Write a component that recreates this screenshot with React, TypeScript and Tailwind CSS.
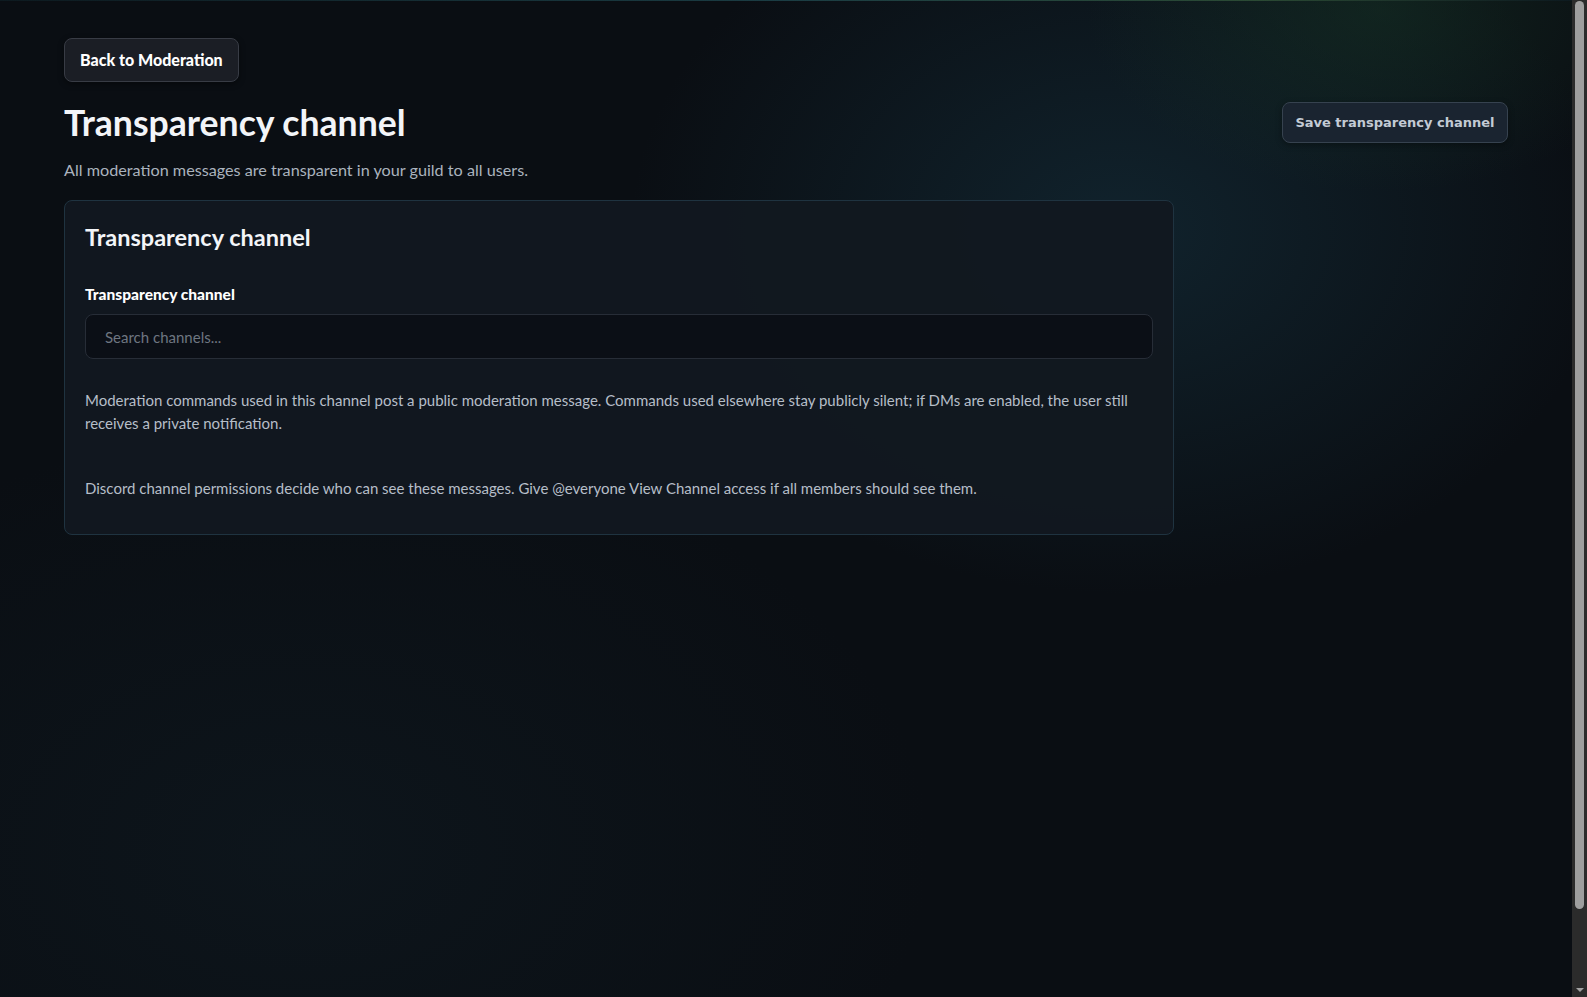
import React from "react";

function FakeScrollbar() {
  // the reference shows the browser's classic scrollbar on the right
  return (
    <div className="relative flex h-full w-[15px] shrink-0 flex-col items-center bg-[#2b2b2b]">
      <div className="mt-px h-[908px] w-[9px] rounded-full bg-[#9e9e9e]" />
      <div className="absolute bottom-[5px] left-1/2 h-0 w-0 -translate-x-1/2 border-x-[4px] border-t-[4px] border-x-transparent border-t-[#a3a3a3]" />
    </div>
  );
}

export default function App() {
  return (
    <div className="flex h-[997px] w-full overflow-hidden bg-[#0a0e13] font-['Lato',sans-serif] text-white">
      <main className="relative flex-1 overflow-hidden">
        {/* background glows */}
        <div className="pointer-events-none absolute inset-0 bg-[radial-gradient(ellipse_700px_520px_at_1120px_230px,rgba(22,52,66,0.55),transparent_70%)]" />
        <div className="pointer-events-none absolute inset-0 bg-[radial-gradient(ellipse_420px_260px_at_1380px_10px,rgba(24,58,40,0.45),transparent_70%)]" />
        <div className="pointer-events-none absolute inset-0 bg-[radial-gradient(ellipse_900px_600px_at_300px_850px,rgba(16,28,36,0.5),transparent_70%)]" />
        <div className="pointer-events-none absolute inset-x-0 top-0 h-px bg-[linear-gradient(90deg,#0d1a20,#1b3d44_50%,#2b4a34_80%,#0d1a20)]" />

        <div className="relative px-16 pt-[38px]">
          <button
            type="button"
            className="h-11 rounded-lg border border-[#383c45] bg-[#1b1e25] px-[15px] text-[16px] font-black text-white shadow-[0_2px_6px_rgba(0,0,0,0.4)]"
          >
            Back to Moderation
          </button>

          <div className="mt-[19px] flex items-start justify-between">
            <div>
              <h1 className="mt-[2px] text-[35.6px] font-bold leading-10 text-[#f3f5f8]">
                Transparency channel
              </h1>
              <p className="mt-[15px] text-[16.2px] leading-6 text-[#aab3be]">
                All moderation messages are transparent in your guild to all users.
              </p>
            </div>
            <button
              type="button"
              className="mt-px h-[41px] w-[226px] rounded-lg border border-[#36424f] bg-[#1a2430] font-['DejaVu_Sans',sans-serif] text-[13px] font-bold text-[#c3cbd5] shadow-[0_2px_6px_rgba(0,0,0,0.35)]"
            >
              Save transparency channel
            </button>
          </div>

          <section className="mt-[18px] w-[1110px] rounded-lg border border-[#1f3340] bg-[#121820]/95 px-5 pb-[34px] pt-5">
            <h2 className="text-[23.5px] font-bold leading-8 text-[#f3f5f8]">
              Transparency channel
            </h2>
            <label className="mt-[31px] block text-[15.5px] font-black leading-5 text-white">
              Transparency channel
            </label>
            <input
              type="text"
              placeholder="Search channels..."
              className="mt-2.5 h-[45px] w-full rounded-lg border border-[#272d37] bg-[#0b0f16] px-[19px] text-[15px] text-white outline-none placeholder:text-[#6e7681]"
            />
            <p className="mt-[30px] text-[15px] leading-[23px] text-[#b6bec8]">
              Moderation commands used in this channel post a public moderation message.
              Commands used elsewhere stay publicly silent; if DMs are enabled, the user
              still receives a private notification.
            </p>
            <p className="mt-[42px] text-[15px] leading-[23px] text-[#b6bec8]">
              Discord channel permissions decide who can see these messages. Give
              @everyone View Channel access if all members should see them.
            </p>
          </section>
        </div>
      </main>
      <FakeScrollbar />
    </div>
  );
}
